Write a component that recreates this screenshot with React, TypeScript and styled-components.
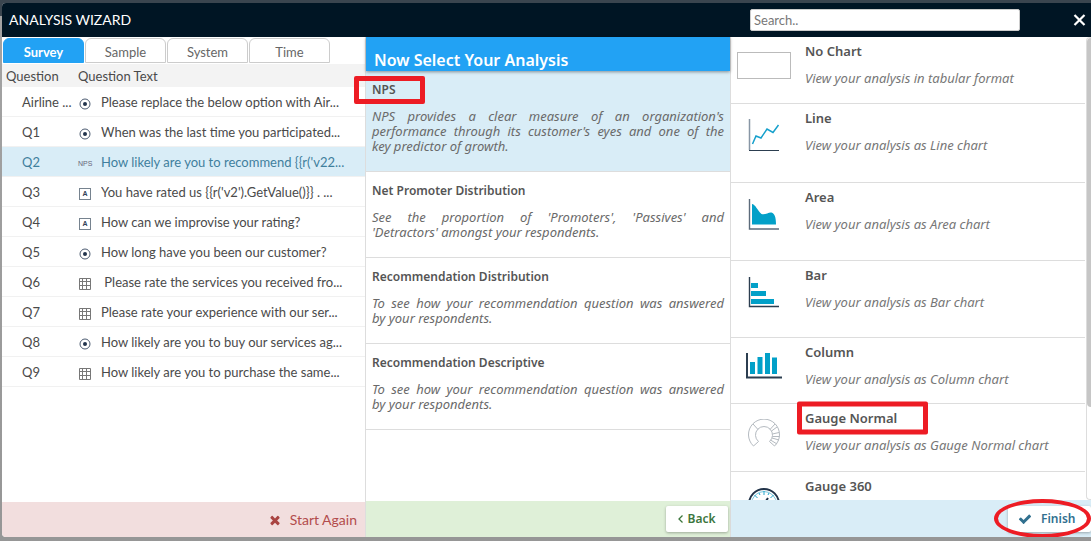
import React from "react";
import styled, { createGlobalStyle, css } from "styled-components";

const lato = `Lato, "Noto Sans", sans-serif`;
const noto = `"Noto Sans", "Open Sans", sans-serif`;

const GlobalStyle = createGlobalStyle`
  * { box-sizing: border-box; }
  body { margin: 0; background: #969696; color: #4a4a4a; font: 13px/18px ${lato}; }
  button, input { font: inherit; color: inherit; }
  button { cursor: pointer; }
`;

const Backdrop = styled.div`
  min-height: 100vh;
  display: flex;
  flex-direction: column;
  padding: 3px 0 4px 2px;
  background: linear-gradient(#3a454f 0 16px, #a3a3a3 16px, #969696);
`;

const Dialog = styled.section`
  flex: 1;
  display: flex;
  flex-direction: column;
  background: #fff;
  border-radius: 4px 0 0 4px;
  overflow: hidden;
`;

const TitleBar = styled.header`
  display: flex;
  align-items: center;
  height: 34px;
  padding: 0 5px 0 7px;
  background: #001524;
  color: #fff;
`;

const DialogTitle = styled.h1`
  margin: 0;
  flex: 1;
  font-size: 14px;
  font-weight: 400;
`;

const SearchBox = styled.input`
  width: 270px;
  height: 22px;
  margin-right: 53px;
  padding: 0 3px;
  border: 1px solid #ccc;
  border-radius: 2px;
  background: #fff;
  color: #444;
  outline: none;
  &::placeholder { color: #777; opacity: 1; }
`;

const CloseButton = styled.button`
  display: flex;
  padding: 0;
  border: 0;
  background: none;
`;

const Columns = styled.div`
  flex: 1;
  display: grid;
  grid-template-columns: 363fr 365fr 361fr;
`;

const Column = styled.div`
  display: flex;
  flex-direction: column;
  min-width: 0;
  & + & { border-left: 1px solid #ddd; }
`;

const ColumnBody = styled.div`
  flex: 1;
`;

const Tabs = styled.div`
  display: flex;
  gap: 1px;
  padding: 1px;
`;

const Tab = styled.button<{ $active?: boolean }>`
  width: 81px;
  height: 25px;
  padding: 2px 0 0;
  border: 1px solid #ccc;
  border-radius: 6px 6px 0 0;
  background: #fff;
  color: #666;
  line-height: 18px;
  ${(p) => p.$active && css`
    border-color: #22a2f4;
    background: #22a2f4;
    color: #fff;
    font-weight: 700;
  `}
`;

const QuestionTable = styled.table`
  width: 100%;
  border-collapse: separate;
  border-spacing: 0;
  table-layout: fixed;
  white-space: nowrap;
`;

const Col = styled.col<{ $width: number }>`
  width: ${(p) => p.$width}px;
`;

const HeadCell = styled.th<{ $indent: number }>`
  height: 23px;
  padding: 0 0 0 ${(p) => p.$indent}px;
  background: #f3f3f3;
  font-weight: 400;
  text-align: left;
`;

const Row = styled.tr<{ $selected?: boolean }>`
  color: ${(p) => (p.$selected ? "#3f7f9d" : "#4a4a4a")};
  background: ${(p) => (p.$selected ? "#d9edf7" : "#fff")};
`;

const Cell = styled.td<{ $indent?: number }>`
  height: 30px;
  padding: 0 0 0 ${(p) => p.$indent ?? 0}px;
  border-bottom: 1px solid #f1f1f1;
  overflow: hidden;
`;

const IconCell = styled(Cell)`
  padding-top: 4px;
  & > svg { display: block; }
`;

const NpsMark = styled.span`
  display: block;
  color: #667;
  font: 7px/10px "Liberation Sans", sans-serif;
`;

const TextMark = styled.span`
  display: block;
  width: 12px;
  height: 12px;
  margin-left: 1px;
  border: 1px solid #76838f;
  color: #2f3f55;
  font: 700 7px/10px "Liberation Sans", sans-serif;
  text-align: center;
`;

const PanelTitle = styled.h2`
  position: relative;
  margin: 0;
  height: 34px;
  padding: 12px 8px 0;
  background: #22a2f4;
  box-shadow: 0 1px 3px rgba(0, 0, 0, 0.4);
  color: #fff;
  font: 600 16px/22px ${noto};
`;

const Analysis = styled.article<{ $selected?: boolean }>`
  padding: 10px 6px 17px;
  border-bottom: 1px solid #ddd;
  background: ${(p) => (p.$selected ? "#d9edf7" : "#fff")};
`;

const ItemTitle = styled.h3<{ $size: number }>`
  position: relative;
  margin: 0;
  color: #555;
  font: 600 ${(p) => p.$size}px/18px ${noto};
`;

const AnalysisText = styled.p`
  margin: 10px 0 0;
  color: #6a6a6a;
  font: italic 13px/15px ${noto};
  text-align: justify;
`;

const ChartPane = styled.div`
  flex: 1 0 0;
  display: flex;
  min-height: 0;
`;

const ChartList = styled.div`
  flex: 1;
  overflow: hidden;
`;

const ChartItem = styled.article<{ $height: number }>`
  display: flex;
  gap: 8px;
  height: ${(p) => p.$height}px;
  padding-top: 5px;
  border-bottom: 1px solid #ddd;
`;

const ChartIcon = styled.div`
  display: flex;
  justify-content: center;
  align-items: flex-start;
  width: 66px;
  padding-top: 10px;
`;

const ChartText = styled.p`
  margin: 9px 0 0;
  color: #777;
  font: italic 13px/18px ${noto};
`;

const ScrollTrack = styled.div`
  width: 5px;
  margin-left: 1px;
  border: 1px solid #ddd;
  border-right: 0;
  border-radius: 4px 0 0 4px;
`;

const ScrollThumb = styled.div`
  height: 80%;
  border-radius: 4px 0 0 4px;
  background: #c6c6c6;
`;

const Footer = styled.footer<{ $height: number; $tone: string }>`
  display: flex;
  align-items: center;
  justify-content: flex-end;
  height: ${(p) => p.$height}px;
  background: ${(p) => p.$tone};
`;

const RestartButton = styled.button`
  display: flex;
  align-items: center;
  gap: 8px;
  padding: 0 8px;
  border: 0;
  background: none;
  color: #b24c4c;
  font-size: 14px;
`;

const RaisedButton = styled.button<{ $color: string }>`
  position: relative;
  display: flex;
  align-items: center;
  height: 26px;
  border: 0;
  border-radius: 2px;
  background: #fff;
  box-shadow: 0 1px 3px rgba(0, 0, 0, 0.3);
  color: ${(p) => p.$color};
  font: 600 12px/18px ${noto};
`;

const BackButton = styled(RaisedButton)`
  justify-content: center;
  gap: 4px;
  width: 62px;
  margin-right: 2px;
  padding: 0;
`;

const FinishButton = styled(RaisedButton)`
  gap: 9px;
  width: 83px;
  padding: 0 0 0 10px;
`;

const Highlight = styled.span<{ $left: number; $width: number; $height: number }>`
  position: absolute;
  z-index: 2;
  top: 50%;
  left: ${(p) => p.$left}px;
  width: ${(p) => p.$width}px;
  height: ${(p) => p.$height}px;
  transform: translateY(-50%);
  border: 5px solid #ed1c24;
  border-radius: 2px;
  pointer-events: none;
`;

const Ring = styled.span`
  position: absolute;
  top: -7px;
  left: -14px;
  right: 0;
  bottom: -6px;
  border: 4px solid #ed1c24;
  border-radius: 50%;
  pointer-events: none;
`;

const RadioGlyph = () => (
  <svg width="14" height="12" viewBox="0 0 14 12">
    <circle cx="7" cy="6" r="5" fill="none" stroke="#4a5a70" />
    <circle cx="7" cy="6" r="2" fill="#22334c" />
  </svg>
);

const GridGlyph = () => (
  <svg width="14" height="12" viewBox="0 0 14 12">
    <path
      d="M1.5.5h11v11h-11zM4.5.5v11M8.5.5v11M1.5 3.5h11M1.5 7.5h11"
      fill="none"
      stroke="#777"
    />
  </svg>
);

const glyphs = {
  radio: <RadioGlyph />,
  nps: <NpsMark>NPS</NpsMark>,
  text: <TextMark>A</TextMark>,
  grid: <GridGlyph />,
};

const NoChartIcon = () => (
  <svg width="54" height="27">
    <rect x=".5" y=".5" width="53" height="26" fill="none" stroke="#bbb" />
  </svg>
);

const LineIcon = () => (
  <svg width="32" height="32" viewBox="0 0 32 32">
    <path d="M1.5 0v31" stroke="#8896a5" strokeWidth="1.5" />
    <path d="M1 31.5h30" stroke="#2c3e50" strokeWidth="1.2" />
    <path d="m4.5 25 3.500-8 5 2 6-9 6 3.500L30.500 6" fill="none" stroke="#16a0cc" strokeWidth="1.5" />
  </svg>
);

const AreaIcon = () => (
  <svg width="32" height="32" viewBox="0 0 32 32">
    <path d="M1.5 1v30H31" fill="none" stroke="#5c6b7b" strokeWidth="1.4" />
    <path d="M4 6c3 0 6 7 9.500 10 4 1 7-2 10-1.500 3 1 4.500 4 4.500 12H4z" fill="#02a0c8" />
  </svg>
);

const BarIcon = () => (
  <svg width="32" height="32" viewBox="0 0 32 32">
    <path d="M1.5 1v29.500H31" fill="none" stroke="#2c3e50" strokeWidth="1.4" />
    <path d="M3 7h7v5H3zM3 15h15v5H3zM3 23h23v5H3z" fill="#02a0c8" />
  </svg>
);

const ColumnIcon = () => (
  <svg width="36" height="26" viewBox="0 0 36 26">
    <path d="M1 0v24.500h35" fill="none" stroke="#2c3e50" strokeWidth="2" />
    <path d="M4 9h5v12H4zM11.500 4h5v17h-5zM19 0h5v21h-5zM26 4.500h5V21h-5z" fill="#02a0c8" />
  </svg>
);

const GaugeIcon = () => (
  <svg width="32" height="30" viewBox="0 0 32 30" fill="none" stroke="#b4bac0">
    <path d="M10.500 22.500 5.500 27A15.500 15.500 0 1 1 26.500 27L21.500 22.500A8.500 8.500 0 1 0 10.500 22.500z" />
    <path d="m5 5 5 5.500M27 5l-5 5.500M23.500 12l5.500-4M24.500 15l6.500-1.500M24.500 17.500h7M24 19l7 2M22.500 21l6.500 4" />
  </svg>
);

const DialIcon = () => (
  <svg width="32" height="32" viewBox="0 0 32 32" fill="none">
    <circle cx="16" cy="17" r="15" stroke="#22344a" strokeWidth="2" />
    <circle cx="16" cy="17" r="12.500" stroke="#7cc8de" />
    <path d="M16 4v4M6.500 8l3 3M25.500 8l-3 3M11 6l1 2M21 6l-1 2" stroke="#22a5cc" />
    <path d="m16 17 4-6" stroke="#22344a" strokeWidth="2" />
  </svg>
);

type Question = { id: string; kind: keyof typeof glyphs; text: string };

const questions: Question[] = [
  { id: "Airline ...", kind: "radio", text: "Please replace the below option with Air..." },
  { id: "Q1", kind: "radio", text: "When was the last time you participated..." },
  { id: "Q2", kind: "nps", text: "How likely are you to recommend {{r('v22..." },
  { id: "Q3", kind: "text", text: "You have rated us {{r('v2').GetValue()}} . ..." },
  { id: "Q4", kind: "text", text: "How can we improvise your rating?" },
  { id: "Q5", kind: "radio", text: "How long have you been our customer?" },
  { id: "Q6", kind: "grid", text: "\u00a0Please rate the services you received fro..." },
  { id: "Q7", kind: "grid", text: "Please rate your experience with our ser..." },
  { id: "Q8", kind: "radio", text: "How likely are you to buy our services ag..." },
  { id: "Q9", kind: "grid", text: "How likely are you to purchase the same..." },
];

// Non-breaking spaces keep the closing phrase of each description together.
const analyses = [
  {
    title: "NPS",
    text: "NPS provides a clear measure of an organization's performance through its customer's eyes and one of the key\u00a0predictor of growth.",
  },
  {
    title: "Net Promoter Distribution",
    text: "See the proportion of 'Promoters', 'Passives' and 'Detractors'\u00a0amongst your respondents.",
  },
  {
    title: "Recommendation Distribution",
    text: "To see how your recommendation question was answered by\u00a0your\u00a0respondents.",
  },
  {
    title: "Recommendation Descriptive",
    text: "To see how your recommendation question was answered by\u00a0your\u00a0respondents.",
  },
];

const charts = [
  { title: "No Chart", text: "View your analysis in tabular format", height: 67, icon: <NoChartIcon /> },
  { title: "Line", text: "View your analysis as Line chart", height: 79, icon: <LineIcon /> },
  { title: "Area", text: "View your analysis as Area chart", height: 78, icon: <AreaIcon /> },
  { title: "Bar", text: "View your analysis as Bar chart", height: 77, icon: <BarIcon /> },
  { title: "Column", text: "View your analysis as Column chart", height: 66, icon: <ColumnIcon /> },
  { title: "Gauge Normal", text: "View your analysis as Gauge Normal chart", height: 68, icon: <GaugeIcon /> },
  { title: "Gauge 360", height: 68, icon: <DialIcon /> },
];

export default function App() {
  return (
    <>
      <GlobalStyle />
      <Backdrop>
        <Dialog aria-label="Analysis wizard">
          <TitleBar>
            <DialogTitle>ANALYSIS WIZARD</DialogTitle>
            <SearchBox type="text" aria-label="Search" placeholder="Search.." />
            <CloseButton aria-label="Close">
              <svg width="13" height="12" viewBox="0 0 13 12">
                <path d="m1.500 1 10 10m0-10-10 10" stroke="#fff" strokeWidth="2.200" />
              </svg>
            </CloseButton>
          </TitleBar>
          <Columns>
            <Column>
              <ColumnBody>
                <Tabs>
                  <Tab $active>Survey</Tab>
                  <Tab>Sample</Tab>
                  <Tab>System</Tab>
                  <Tab>Time</Tab>
                </Tabs>
                <QuestionTable>
                  <colgroup>
                    <Col $width={73} />
                    <Col $width={26} />
                    <col />
                  </colgroup>
                  <thead>
                    <tr>
                      <HeadCell $indent={4}>Question</HeadCell>
                      <HeadCell $indent={3} colSpan={2}>Question Text</HeadCell>
                    </tr>
                  </thead>
                  <tbody>
                    {questions.map((q) => (
                      <Row key={q.id} $selected={q.id === "Q2"}>
                        <Cell $indent={20}>{q.id}</Cell>
                        <IconCell $indent={3}>{glyphs[q.kind]}</IconCell>
                        <Cell>{q.text}</Cell>
                      </Row>
                    ))}
                  </tbody>
                </QuestionTable>
              </ColumnBody>
              <Footer $height={35} $tone="#f2dede">
                <RestartButton>
                  <svg width="14" height="14" viewBox="0 0 1792 1792" fill="#a94442">
                    <path d="M1490 1322q0 40-28 68l-136 136q-28 28-68 28t-68-28l-294-294-294 294q-28 28-68 28t-68-28l-136-136q-28-28-28-68t28-68l294-294-294-294q-28-28-28-68t28-68l136-136q28-28 68-28t68 28l294 294 294-294q28-28 68-28t68 28l136 136q28 28 28 68t-28 68l-294 294 294 294q28 28 28 68z" />
                  </svg>
                  Start Again
                </RestartButton>
              </Footer>
            </Column>
            <Column>
              <PanelTitle>Now Select Your Analysis</PanelTitle>
              <ColumnBody>
                {analyses.map((a, i) => (
                  <Analysis key={a.title} $selected={i === 0}>
                    <ItemTitle $size={12}>
                      {a.title}
                      {i === 0 && <Highlight $left={-18} $width={71} $height={28} />}
                    </ItemTitle>
                    <AnalysisText>{a.text}</AnalysisText>
                  </Analysis>
                ))}
              </ColumnBody>
              <Footer $height={36} $tone="#dff0d8">
                <BackButton $color="#3c763d">
                  <svg width="5" height="8" viewBox="0 0 5 8">
                    <path d="M4.500.5 1 4l3.500 3.500" fill="none" stroke="#3c763d" strokeWidth="1.300" />
                  </svg>
                  Back
                </BackButton>
              </Footer>
            </Column>
            <Column>
              <ChartPane>
                <ChartList>
                  {charts.map((c) => (
                    <ChartItem key={c.title} $height={c.height}>
                      <ChartIcon>{c.icon}</ChartIcon>
                      <div>
                        <ItemTitle $size={13}>
                          {c.title}
                          {c.title === "Gauge Normal" && <Highlight $left={-8} $width={131} $height={33} />}
                        </ItemTitle>
                        {c.text && <ChartText>{c.text}</ChartText>}
                      </div>
                    </ChartItem>
                  ))}
                </ChartList>
                <ScrollTrack>
                  <ScrollThumb />
                </ScrollTrack>
              </ChartPane>
              <Footer $height={37} $tone="#d9edf7">
                <FinishButton $color="#31708f">
                  <svg width="14" height="14" viewBox="0 0 1792 1792" fill="#31708f">
                    <path d="M1671 566q0 40-28 68l-724 724-136 136q-28 28-68 28t-68-28l-136-136-362-362q-28-28-28-68t28-68l136-136q28-28 68-28t68 28l294 295 656-657q28-28 68-28t68 28l136 136q28 28 28 68z" />
                  </svg>
                  Finish
                  <Ring />
                </FinishButton>
              </Footer>
            </Column>
          </Columns>
        </Dialog>
      </Backdrop>
    </>
  );
}
